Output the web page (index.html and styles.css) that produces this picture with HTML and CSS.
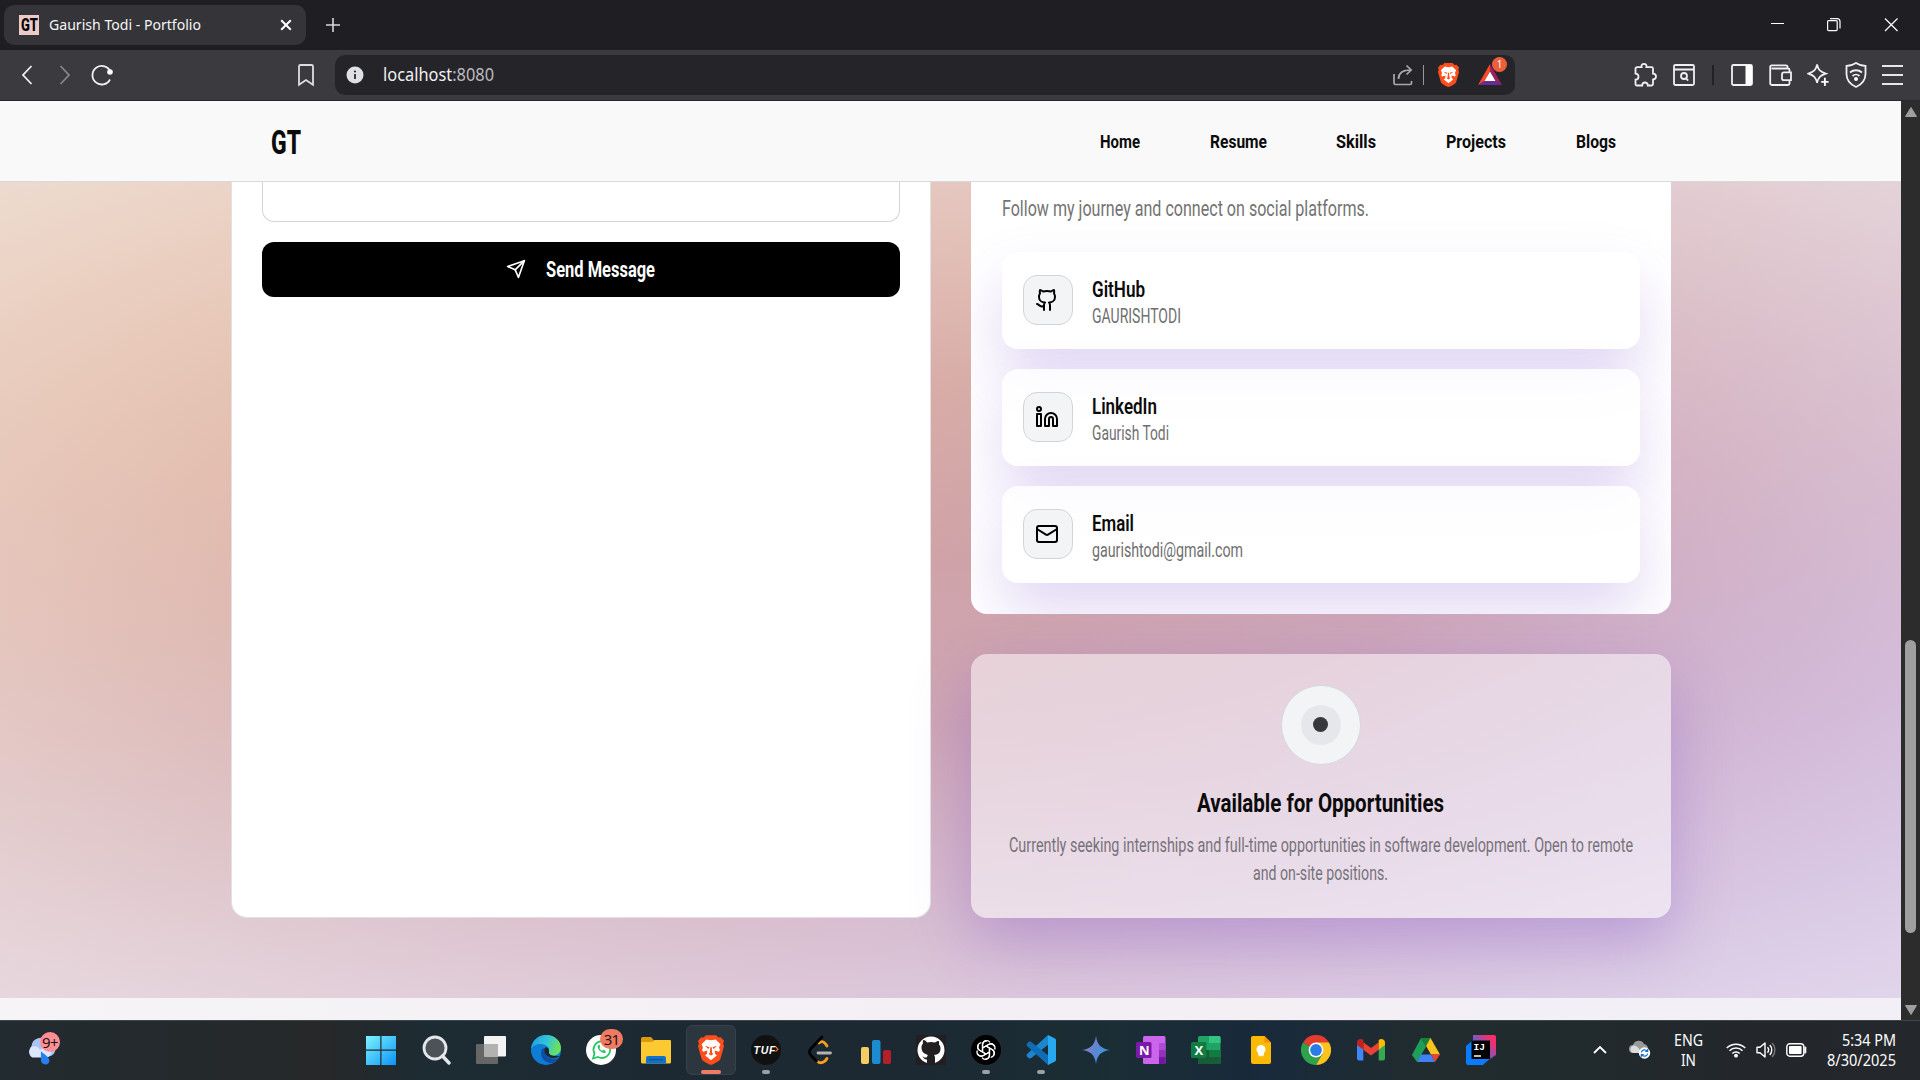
FILE: index.html
```html
<!DOCTYPE html>
<html lang="en">
<head>
<meta charset="utf-8">
<title>Gaurish Todi - Portfolio</title>
<link rel="stylesheet" href="styles.css">
</head>
<body>
<div class="tabstrip">
  <div class="tab">
    <div class="favicon"><span class="fit" data-w="17">GT</span></div>
    <span class="tab-title"><span class="fit" data-w="152">Gaurish Todi - Portfolio</span></span>
    <svg class="tab-close" width="12" height="12" viewBox="0 0 12 12"><path d="M1.2 1.2l9.6 9.6M10.800 1.200l-9.600 9.600" stroke="#fff" stroke-width="2" fill="none"/></svg>
  </div>
  <svg class="newtab" width="14" height="14" viewBox="0 0 14 14"><path d="M7 0v14M0 7h14" stroke="#d8d8da" stroke-width="1.6"/></svg>
  <div class="winctl">
    <svg width="58" height="50" viewBox="0 0 58 50"><path d="M25 23.500h13" stroke="#fff"/></svg>
    <svg width="58" height="50" viewBox="0 0 58 50"><g fill="none" stroke="#fff" stroke-width="1.200"><rect x="23.600" y="20.600" width="9.600" height="10" rx="1"/><path d="M26 18.600h7a3 3 0 0 1 3 3v7"/></g></svg>
    <svg width="58" height="50" viewBox="0 0 58 50"><path d="M23 18.500l12.500 12.500M35.500 18.500L23 31" stroke="#fff" stroke-width="1.200"/></svg>
  </div>
</div>

<div class="toolbar">
  <div class="nav-btns">
    <svg width="12" height="22" viewBox="0 0 12 22"><path d="M10.500 2L2 11l8.500 9" class="ln"/></svg>
    <svg width="12" height="22" viewBox="0 0 12 22" class="dim"><path d="M1.500 2L10 11l-8.500 9" class="ln"/></svg>
    <svg width="24" height="24" viewBox="0 0 24 24"><path d="M20.500 9A9.300 9.300 0 1 0 20 16.500" class="ln"/><circle cx="20" cy="9" r="2.800" fill="#fff"/></svg>
  </div>
  <svg class="bookmark" width="18" height="24" viewBox="0 0 18 24"><path d="M3.500 2h11a1.500 1.500 0 0 1 1.500 1.500v18.300L9 17l-7 4.800V3.500A1.500 1.500 0 0 1 3.500 2z" class="ln"/></svg>
  <div class="urlbar">
    <svg width="18" height="18" viewBox="0 0 18 18"><circle cx="9" cy="9" r="8.500" fill="#dfdfe6"/><path d="M9 8v5" stroke="#2a2930" stroke-width="1.800"/><circle cx="9" cy="5.500" r="1.100" fill="#2a2930"/></svg>
    <span class="url"><span class="fit" data-w="111">localhost<i>:8080</i></span></span>
    <svg class="share" width="22" height="22" viewBox="0 0 22 22"><g fill="none" stroke="#a9a9ad" stroke-width="1.700"><path d="M2 10v9a1.500 1.500 0 0 0 1.500 1.500H18a1.500 1.500 0 0 0 1.500-1.500v-2"/><path d="M6.500 15c0-6 4-9 12.500-9M14.500 1.500L19.200 6l-4.700 4.500"/></g></svg>
    <span class="usep"></span>
    <svg class="shield" width="21" height="24" viewBox="0 0 28 32"><use href="#brave"/></svg>
    <div class="bat">
      <svg width="24" height="22" viewBox="0 0 24 22"><path d="M12 0L0 21l6.500-3.500L12 7z" fill="#ff4724"/><path d="M12 0l12 21-6-3.500L12 7z" fill="#9e1f63"/><path d="M0 21h24l-6-4H6z" fill="#662d91"/><path d="M12 7.500l5.500 9.500h-11z" fill="#fff"/></svg>
      <b>1</b>
    </div>
  </div>
  <div class="tools">
    <svg width="24" height="26" viewBox="0 0 24 26"><path class="ln" d="M4 5.200h4.600c-1.200-4.500 6-4.500 4.800 0h5.100a1.500 1.500 0 0 1 1.500 1.500v5c4 .3 4 5.500 0 5.800V22a1.500 1.500 0 0 1-1.500 1.500h-3.700c.2-4-5.600-4-5.600 0H4A1.500 1.500 0 0 1 2.500 22v-4.300c4-.2 4-5.800 0-6v-5A1.500 1.500 0 0 1 4 5.200z"/></svg>
    <svg width="22" height="24" viewBox="0 0 22 24"><g class="ln"><rect x="1" y="2" width="20" height="20" rx="1.500"/><path d="M1 6.500h20M13.200 15.500l2 2.200"/><circle cx="11" cy="13" r="3"/></g></svg>
    <span class="tsep"></span>
    <svg width="22" height="24" viewBox="0 0 22 24"><rect class="ln" x="1" y="2" width="20" height="20" rx="1.500"/><path d="M14.500 2H21v20h-6.500z" fill="#fff"/></svg>
    <svg width="23" height="24" viewBox="0 0 23 24"><g class="ln"><path d="M20.500 9V7a1.500 1.500 0 0 0-1.500-1.500H2.500M18.500 5.500V3.800A1.500 1.500 0 0 0 17 2.300H3a1.800 1.800 0 0 0-1.800 1.800v16A1.800 1.800 0 0 0 3 22h16a1.500 1.500 0 0 0 1.500-1.500V18"/><path d="M22 9.300h-7a2 2 0 0 0-2 2v3.900a2 2 0 0 0 2 2h7z"/></g></svg>
    <svg width="22" height="26" viewBox="0 0 24 26"><path class="ln" d="M11 1.500c1.500 6 3.200 8 9.500 10-6.300 2-8 4-9.500 10-1.500-6-3.200-8-9.500-10 6.300-2 8-4 9.500-10z"/><path d="M19.500 16v9M15.500 20.500h8" stroke="#fff" stroke-width="2"/></svg>
    <svg width="22" height="26" viewBox="0 0 22 26"><g class="ln"><path d="M11 1c3 2 6 3 9.500 3v8c0 7-4 10.500-9.500 13C5.500 22.500 1.500 19 1.500 12V4C5 4 8 3 11 1z"/><path d="M5 10.500c3.500-3 8.500-3 12 0M7.500 14c2-1.900 5-1.900 7 0"/></g><circle cx="11" cy="17" r="2" fill="#fff"/></svg>
    <svg width="21" height="22" viewBox="0 0 21 22"><path d="M0 2h21M0 11h21M0 20h21" stroke="#e6e6e8" stroke-width="1.800"/></svg>
  </div>
</div>

<div class="viewport">
<div class="page">
  <header class="site-header">
    <span class="logo"><span class="fit" data-w="30">GT</span></span>
    <nav>
      <a><span class="fit" data-w="40">Home</span></a>
      <a><span class="fit" data-w="57">Resume</span></a>
      <a><span class="fit" data-w="40">Skills</span></a>
      <a><span class="fit" data-w="60">Projects</span></a>
      <a><span class="fit" data-w="40">Blogs</span></a>
    </nav>
  </header>
  <section class="contact">
    <div class="form-card">
      <div class="textarea"></div>
      <div class="send">
        <svg width="20" height="20" viewBox="0 0 24 24" fill="none" stroke="#fff" stroke-width="2" stroke-linejoin="round" stroke-linecap="round"><path d="M22 2L2 9l9 4 4 9z"/><path d="M22 2L11 13"/></svg>
        <span class="fit" data-w="109">Send Message</span>
      </div>
    </div>
    <div class="side">
      <div class="social-card">
        <p class="lead"><span class="fit" data-w="367">Follow my journey and connect on social platforms.</span></p>
        <div class="social">
          <div class="ico"><svg width="24" height="24" viewBox="0 0 24 24"><path d="M15 22v-4a4.800 4.800 0 0 0-1-3.500c3 0 6-2 6-5.500.08-1.250-.27-2.480-1-3.500.28-1.150.28-2.350 0-3.500 0 0-1 0-3 1.500-2.640-.5-5.360-.5-8 0C6 2 5 2 5 2c-.3 1.150-.3 2.350 0 3.500A5.400 5.400 0 0 0 4 9c0 3.500 3 5.500 6 5.500-.39.490-.68 1.050-.85 1.650-.17.600-.22 1.230-.15 1.850v4"/><path d="M9 18c-4.510 2-5-2-7-2"/></svg></div>
          <div class="txt"><h4><span class="fit" data-w="53">GitHub</span></h4><p><span class="fit" data-w="89">GAURISHTODI</span></p></div>
        </div>
        <div class="social">
          <div class="ico"><svg width="24" height="24" viewBox="0 0 24 24"><path d="M16 8a6 6 0 0 1 6 6v7h-4v-7a2 2 0 0 0-4 0v7h-4v-7a6 6 0 0 1 6-6z"/><path d="M2 9h4v12H2z"/><circle cx="4" cy="4" r="2"/></svg></div>
          <div class="txt"><h4><span class="fit" data-w="65">LinkedIn</span></h4><p><span class="fit" data-w="77">Gaurish Todi</span></p></div>
        </div>
        <div class="social">
          <div class="ico"><svg width="24" height="24" viewBox="0 0 24 24"><rect x="2" y="4" width="20" height="16" rx="2"/><path d="M22 7l-8.970 5.700a1.940 1.940 0 0 1-2.060 0L2 7"/></svg></div>
          <div class="txt"><h4><span class="fit" data-w="42">Email</span></h4><p><span class="fit" data-w="151">gaurishtodi@gmail.com</span></p></div>
        </div>
      </div>
      <div class="avail">
        <div class="ring"><div class="ring2"><div class="dot"></div></div></div>
        <h3><span class="fit" data-w="247">Available for Opportunities</span></h3>
        <p><span class="fit" data-w="624">Currently seeking internships and full-time opportunities in software development. Open to remote</span></p>
        <p><span class="fit" data-w="135">and on-site positions.</span></p>
      </div>
    </div>
  </section>
  <div class="footer"></div>
</div>
<div class="scrollbar">
  <svg width="12" height="10" viewBox="0 0 12 10"><path d="M6 0.500l5.500 9h-11z" fill="#9f9f9f" stroke="#9f9f9f" stroke-linejoin="round"/></svg>
  <div class="thumb"></div>
  <svg width="12" height="10" viewBox="0 0 12 10"><path d="M6 9.500L0.500.5h11z" fill="#9f9f9f" stroke="#9f9f9f" stroke-linejoin="round"/></svg>
</div>
</div>

<div class="taskbar">
  <div class="weather">
    <svg width="34" height="36" viewBox="0 0 34 36"><path d="M9 27a7 7 0 0 1-1-11 9.500 9.500 0 0 1 17-5 8 8 0 0 1 1 16z" fill="#a9c3f2"/><path d="M9 28a6.500 6.500 0 0 1-1-11c4-2 8 0 9 3 3-3 8-3 10-1a5.500 5.500 0 0 1-2 9z" fill="#dce7fb"/><path d="M18 21.500c4 3.500 9 6.500 9 10a4 4 0 0 1-4.300 4 4.500 4.500 0 0 1-4.700-4.300z" fill="#257fee"/></svg>
    <b>9+</b>
  </div>
  <div class="apps">
    <div><svg width="30" height="30" viewBox="0 0 30 30"><defs><linearGradient id="w" x2="1" y2="1"><stop stop-color="#7df3ff"/><stop offset="1" stop-color="#0a94f5"/></linearGradient></defs><path fill="url(#w)" d="M0 1h14.300v13.500H0zM15.500 1H30v13.500H15.500zM0 15.700h14.300V30H0zM15.500 15.700H30V30H15.500z"/></svg></div>
    <div><svg width="30" height="30" viewBox="0 0 30 30"><circle cx="14" cy="13" r="11" fill="#4b5258" stroke="#e4e7ea" stroke-width="2.800"/><path d="M21.500 21l6.500 7" stroke="#e4e7ea" stroke-width="3.400" stroke-linecap="round"/></svg></div>
    <div><svg width="30" height="30" viewBox="0 0 30 30"><rect y="9" width="22" height="20" rx="1" fill="#666"/><rect x="8" y="1" width="22" height="20.500" rx="1" fill="#f3f3f3"/><path d="M8 9h14v12.500H8z" fill="#b2b2b2"/></svg></div>
    <div><svg width="30" height="30" viewBox="0 0 30 30"><defs><linearGradient id="e1" x2="1" y2=".3"><stop stop-color="#1a9be4"/><stop offset=".6" stop-color="#35c6d6"/><stop offset="1" stop-color="#6be05a"/></linearGradient></defs><circle cx="15" cy="15" r="15" fill="#0f7cd6"/><path d="M0 14C1 5 7.500 0 15 0c9 0 15 6 15 13 0 5-4 7.500-8 7.500-4 0-5.500-1.500-4.200-3.500C19.500 13 15 9 10 9 5 9 1.500 11 0 14z" fill="url(#e1)"/><path d="M11 14c-3 7 2 14 9 14 3 0 6-1.500 8-5C18 26 12 20 14 13z" fill="#0d4fa0"/><path d="M14 13c-2 4 1 9 7 10 3 .3 5.500-.3 7.500-2 -3 0-12 1-10.500-5.500C18 13.500 15.500 11 14 13z" fill="#1a2630"/></svg></div>
    <div class="wa"><svg width="30" height="30" viewBox="0 0 30 30"><circle cx="15" cy="15" r="15" fill="#fff"/><path d="M7 23.500l1.500-5A8.300 8.300 0 1 1 12 22z" fill="none" stroke="#25c862" stroke-width="1.800"/><path d="M12 10.500c-2 3 4.500 9 7.500 7.200l.3-1.700-2.500-1.200-1.200 1c-1.500-.8-2.200-1.800-2.600-2.800l.8-1.200-1-2.200z" fill="#25c862"/></svg><b>31</b></div>
    <div><svg width="30" height="30" viewBox="0 0 30 30"><path d="M0 3.500A1.500 1.500 0 0 1 1.500 2H10l3 3.500V9H0z" fill="#d99a0b"/><path d="M0 7h11l2.500-2H29a1 1 0 0 1 1 1v21a1.500 1.500 0 0 1-1.500 1.500h-27A1.500 1.500 0 0 1 0 27z" fill="#fcc931"/><path d="M5 28.500V23a2 2 0 0 1 2-2h16a2 2 0 0 1 2 2v5.500z" fill="#1072cc"/><path d="M8 24.700h14" stroke="#0a4a94"/></svg></div>
    <div class="active"><svg width="26" height="30" viewBox="0 0 28 32"><g id="brave"><path d="M8.500 0h11L22 2.500l2.500-.3L28 6l-1 3 1 3-4 14c-.8 2-8.500 6-10 6s-9.200-4-10-6L0 12l1-3-1-3 3.500-3.800 2.500.3z" fill="#ff4e1b"/><path d="M14 5.500l5-.8 5.200 5c-.8 2-2 3-1.200 4.800 1.200 1.500.2 3-.8 3.500L18 16.500l.3 3.500 2 2L14 27l-6.300-5 2-2 .3-3.500L5.800 18c-1-.5-2-2-.8-3.500.8-1.800-.4-2.800-1.200-4.800l5.200-5z" fill="#fff"/><path d="M7.500 11.500l5 1.500-1.500 1.800zM20.500 11.500l-5 1.500 1.500 1.800zM13.200 13h1.600l.4 6 1.300 1.200L14 22l-2.500-1.800 1.300-1.200z" fill="#ff4e1b"/></g></svg><i></i></div>
    <div class="run"><svg width="30" height="30" viewBox="0 0 30 30"><circle cx="15" cy="15" r="15" fill="#111"/><text x="2.500" y="19" textLength="22" font-size="10.500" font-weight="bold" font-style="italic" fill="#fff" font-family="Liberation Sans, sans-serif">TUF</text><path d="M25 12l2 2.200-2.500 2.500" stroke="#f06a2c" stroke-width="1.200" fill="none"/></svg><i></i></div>
    <div><svg width="30" height="30" viewBox="0 0 30 30"><g fill="none" stroke-width="2.800" stroke-linecap="round"><path d="M13 8c3-3 6-.5 8 3M11.500 26.500c3 2.500 7.500 1 9.500-3" stroke="#f7a11b"/><path d="M16 2L5 13.500c-2 2-2 5 0 7l5.500 5.500" stroke="#000"/><path d="M12 18h12.500" stroke="#b3b3b3"/></g></svg></div>
    <div><svg width="30" height="30" viewBox="0 0 30 30"><rect x="0" y="12" width="8" height="17" rx="2" fill="#f4ce63"/><rect x="11" y="5" width="8.500" height="24" rx="2" fill="#1c8bd0"/><rect x="22" y="15" width="8" height="14" rx="2" fill="#b3202a"/></svg></div>
    <div><svg width="30" height="30" viewBox="0 0 30 30"><path fill="#231f20" d="M0 0h30v30H0z"/><path d="M11 28c-6-2-9.500-7-9.500-13a13.500 13.500 0 0 1 27 0c0 6-4 11-9.500 13v-5c0-1.500-.4-2.300-1-3 4-.5 6.500-2 6.500-6.500 0-2-.6-3-1.500-4 .3-1.500.2-2.500-.2-3.600-1.500 0-2.700.7-4 1.600a13 13 0 0 0-7.600 0C9.900 5.600 8.700 4.900 7.200 4.900 6.800 6 6.700 7 7 8.500c-.9 1-1.500 2-1.500 4C5.500 17 8 18.500 12 20c-.7.700-1 1.300-1 2.200-2 .8-3.500.2-4.700-1.700 1 3 2.700 4.300 4.700 4z" fill="#fff"/></svg></div>
    <div class="run"><svg width="30" height="30" viewBox="0 0 30 30"><circle cx="15" cy="15" r="15" fill="#000"/><g fill="none" stroke="#fff" stroke-width="1.300"><path id="kn" d="M11.500 17V9.500a4.200 4.200 0 0 1 7.500-2.200M11.500 13l6.500-3.700a4 4 0 0 1 5.500 2"/><use href="#kn" transform="rotate(60 15 15)"/><use href="#kn" transform="rotate(120 15 15)"/><use href="#kn" transform="rotate(180 15 15)"/><use href="#kn" transform="rotate(240 15 15)"/><use href="#kn" transform="rotate(300 15 15)"/></g></svg><i></i></div>
    <div class="run"><svg width="30" height="30" viewBox="0 0 30 30"><path d="M22 0L1 19l-.5 2L3 23.500l2-.3L23 9z" fill="#1a86cf"/><path d="M22 30L1 11l-.5-2L3 6.500l2 .3L23 21z" fill="#0f6db5"/><path d="M22 0l7 3.500a2 2 0 0 1 1 1.500v20a2 2 0 0 1-1 1.500L22 30z" fill="#27a9f2"/></svg><i></i></div>
    <div><svg width="30" height="30" viewBox="0 0 30 30"><defs><linearGradient id="gm" x2="1" y1=".3" y2=".7"><stop stop-color="#9a7cc0"/><stop offset=".5" stop-color="#5b86d8"/><stop offset="1" stop-color="#2f9fc8"/></linearGradient></defs><path d="M15 1c1.300 9 5 12.700 14 14-9 1.300-12.700 5-14 14-1.300-9-5-12.700-14-14C10 13.700 13.700 10 15 1z" fill="url(#gm)"/></svg></div>
    <div><svg width="30" height="30" viewBox="0 0 30 30"><rect x="7" y="1" width="22.500" height="28" rx="1.500" fill="#cb66ec"/><path d="M23 8h6.500v7H23z" fill="#b04ad6"/><path d="M23 15h6.500v7H23z" fill="#9133bd"/><path d="M23 22h6.500v5.500a1.500 1.500 0 0 1-1.500 1.500h-5z" fill="#7516a4"/><rect x="0" y="7" width="15.500" height="16" rx="1.500" fill="#7b1aa8"/><text x="3" y="19.500" font-size="13" font-weight="bold" fill="#fff" font-family="Open Sans, sans-serif">N</text></svg></div>
    <div><svg width="30" height="30" viewBox="0 0 30 30"><rect x="7" y="1" width="22.500" height="28" rx="1.500" fill="#21a366"/><path d="M18 1h10a1.500 1.500 0 0 1 1.500 1.500V8H18z" fill="#33c481"/><path d="M7 15h11v7H7z" fill="#185c37"/><path d="M18 15h11.500v7H18z" fill="#107c41"/><path d="M7 22h22.500v5.500A1.500 1.500 0 0 1 28 29H8.500A1.500 1.500 0 0 1 7 27.500z" fill="#185c37"/><rect x="0" y="7" width="15.500" height="16" rx="1.500" fill="#107c41"/><text x="3.500" y="19.500" font-size="13" font-weight="bold" fill="#fff" font-family="Open Sans, sans-serif">X</text></svg></div>
    <div><svg width="30" height="30" viewBox="0 0 30 30"><path d="M5 3a2 2 0 0 1 2-2h11.500l6.500 6.500V27a2 2 0 0 1-2 2H7a2 2 0 0 1-2-2z" fill="#fbb904"/><path d="M18.500 1l6.500 6.500h-6.500z" fill="#f29100"/><circle cx="15" cy="14.500" r="4.500" fill="#fff"/><path d="M12.500 18h5v1.700h-5zM12.500 20.700h5" stroke="#fff" fill="#fff"/></svg></div>
    <div><svg width="30" height="30" viewBox="0 0 30 30"><path d="M15 15L2 7.500A15 15 0 0 1 28 7.500z" fill="#e33b2e"/><path d="M15 15L2 7.500A15 15 0 0 0 15 30l6.500-11.200z" fill="#2fa24c"/><path d="M15 7.500h13A15 15 0 0 1 15 30l6.500-11.200z" fill="#fcc31e"/><circle cx="15" cy="15" r="7.400" fill="#fff"/><circle cx="15" cy="15" r="5.900" fill="#2a7de9"/></svg></div>
    <div><svg width="30" height="30" viewBox="0 0 30 30"><path d="M1 7v16.500a2 2 0 0 0 2 2h4.300V12z" fill="#4285f4"/><path d="M29 7v16.500a2 2 0 0 1-2 2h-4.300V12z" fill="#34a853"/><path d="M7.300 7.200L15 13l7.700-5.800v7.600L15 20.500l-7.700-5.700z" fill="#ea4335"/><path d="M1 7.500C1 4 5 3 7.300 5v9.800L1 10z" fill="#c5221f"/><path d="M29 7.500C29 4 25 3 22.700 5v9.800L29 10z" fill="#fbbc04"/></svg></div>
    <div><svg width="30" height="30" viewBox="0 0 30 30"><path d="M10 3l5 8.700L6 27l-5-7z" fill="#1e9e58"/><path d="M19.500 3L29 19.500H20L10.500 3z" fill="#fcc31e"/><path d="M10 3h9.500l-4.700 8.500z" fill="#188038"/><path d="M10 19.500h10L24 27H6z" fill="#3f82f3"/><path d="M20 19.500h9L24 27z" fill="#ea4335"/></svg></div>
    <div><svg width="30" height="30" viewBox="0 0 30 30"><defs><linearGradient id="ij" x2="1" y1="1" y2="0"><stop offset=".3" stop-color="#3b6cf0"/><stop offset=".8" stop-color="#f0306e"/></linearGradient></defs><path d="M7 0h21a2 2 0 0 1 2 2v18L18 28 7 12z" fill="url(#ij)"/><path d="M0 11l7-6v19h16l-6 6H2a2 2 0 0 1-2-2z" fill="#087cfa"/><path d="M5.500 5.500h18.500v18.500H5.500z" fill="#000"/><text x="7.500" y="14.500" font-size="9.500" font-weight="bold" fill="#fff" font-family="Liberation Mono, monospace">IJ</text><path d="M8 21h7" stroke="#fff" stroke-width="1.500"/></svg></div>
  </div>
  <div class="tray">
    <svg class="chev" width="14" height="10" viewBox="0 0 14 10"><path d="M1 8l6-6 6 6" fill="none" stroke="#fff" stroke-width="1.800"/></svg>
    <svg class="cloud" width="22" height="20" viewBox="0 0 22 20"><path d="M4 13a4 4 0 0 1 0-8 6 6 0 0 1 11-1 5 5 0 0 1 2 9z" fill="#9a9a9a"/><path d="M4 13a4 4 0 0 1 0-7.500c4 0 6 2 8 7.500z" fill="#dcdcdc"/><circle cx="15.500" cy="13" r="5.700" fill="#fff"/><path d="M12.300 12.500a3.300 3.300 0 0 1 6-1.200M18.700 13.500a3.300 3.300 0 0 1-6 1.200M18.700 9v2.500h-2.500M12.300 17v-2.500h2.500" stroke="#1470c8" stroke-width="1.200" fill="none"/></svg>
    <div class="lang"><span class="fit" data-w="29">ENG</span><span class="fit" data-w="15">IN</span></div>
    <svg class="wifi" width="20" height="16" viewBox="0 0 20 16"><g fill="none" stroke="#fff" stroke-width="1.500"><path d="M.8 6a13 13 0 0 1 18.400 0M3.500 8.800a9.200 9.200 0 0 1 13 0M6.300 11.500a5.300 5.300 0 0 1 7.400 0"/></g><circle cx="10" cy="13.700" r="1.900" fill="#fff"/></svg>
    <svg class="vol" width="20" height="18" viewBox="0 0 20 18"><g fill="none" stroke="#fff" stroke-width="1.400"><path d="M1 6.300h3L9 2v14l-5-4.300H1z" stroke-linejoin="round"/><path d="M11.500 6.300c1.300 1.500 1.300 3.900 0 5.400M13.800 4c2.600 2.700 2.600 7.300 0 10"/><path d="M16.200 2c3.600 4 3.600 10 0 14" stroke="#777"/></g></svg>
    <svg class="batt" width="21" height="14" viewBox="0 0 21 14"><rect x=".8" y=".8" width="17" height="12.400" rx="3" fill="none" stroke="#fff" stroke-width="1.400"/><rect x="3" y="3" width="12.600" height="8" rx="1" fill="#fff"/><path d="M19.300 4.500v5" stroke="#fff" stroke-width="2" stroke-linecap="round"/></svg>
    <div class="clock"><span class="fit" data-w="54">5:34 PM</span><span class="fit" data-w="69">8/30/2025</span></div>
  </div>
</div>
<script src="fit.js"></script>
</body>
</html>
```
FILE: styles.css
```css
* { box-sizing: border-box; margin: 0; padding: 0; }
body { width: 1920px; height: 1080px; overflow: hidden; background: #1f1e23; font-family: "Noto Sans", sans-serif; display: flex; flex-direction: column; }
svg { display: block; flex: none; }
.fit { display: inline-block; white-space: nowrap; transform-origin: 0 50%; }

/* browser chrome */
.tabstrip { height: 50px; flex: none; background: #1f1e23; display: flex; align-items: center; padding-left: 4px; }
.tab { width: 302px; height: 40px; border-radius: 10px; background: #353439; display: flex; align-items: center; padding: 0 14px 0 15px; }
.favicon { width: 20px; height: 20px; background: #eccac8; color: #000; font: 800 19px/20px Roboto, sans-serif; padding-left: 2px; }
.tab-title { margin-left: 10px; margin-top: -2px; color: #f4f4f5; font-size: 14.500px; }
.tab-close { margin-left: auto; }
.newtab { margin-left: 20px; }
.winctl { margin-left: auto; display: flex; }
.toolbar { height: 51px; flex: none; background: #3b3a3f; border-bottom: 1px solid #29282c; display: flex; align-items: center; }
.ln { fill: none; stroke: #f0f0f2; stroke-width: 1.8; }
.dim { opacity: .42; }
.nav-btns { display: flex; align-items: center; gap: 26px; padding-left: 21px; width: 297px; }
.nav-btns svg:last-child { margin-left: -7px; }
.bookmark { opacity: .9; }
.urlbar { margin-left: 20px; width: 1180px; height: 40px; border-radius: 10px; background: #252429; display: flex; align-items: center; padding-left: 11px; }
.url { margin-left: 19px; margin-top: -2px; color: #f0f0f2; font-size: 17.500px; }
.url i { font-style: normal; color: #b9b9bd; }
.share { margin-left: auto; }
.usep { width: 1px; height: 20px; background: #98989c; margin-left: 9px; }
.shield { margin-left: 14px; }
.bat { position: relative; margin: 0 13px 0 19px; }
.bat b { position: absolute; left: 14px; top: -7px; width: 15px; height: 15px; border-radius: 8px; background: #ed5f3b; color: #fff; font: 10px/15px "Noto Sans", sans-serif; text-align: center; }
.tools { margin-left: auto; padding-right: 17px; display: flex; align-items: center; gap: 15.400px; }
.tsep { width: 2px; height: 20px; background: #222126; margin: 0 2px; }

/* page */
.viewport { height: 919px; flex: none; display: flex; }
.page { width: 1901px; height: 919px; overflow: hidden; display: flex; flex-direction: column; font-family: Roboto, sans-serif; }
.site-header { height: 81px; flex: none; background: #f9f9f9; border-bottom: 1px solid #d8dada; display: flex; align-items: center; justify-content: space-between; padding: 1px 285px 0 271px; color: #0b0b0b; }
.logo { font-size: 34px; font-weight: 800; }
.site-header nav { display: flex; gap: 69.800px; font-size: 18.500px; font-weight: 700; }
.contact { height: 816px; flex: none; display: flex; gap: 40px; padding: 0 230px 80px 231px; align-items: stretch;
  background:
    radial-gradient(ellipse 1650px 610px at 960px 375px, rgba(240,236,242,0) 0, rgba(240,236,242,.08) 28%, rgba(240,236,242,.62) 80%, rgba(240,236,242,.78) 100%),
    linear-gradient(156deg, #e8b78a 0, #dcab9b 28%, #d0a3a6 46%, #c99fb5 64%, #c09ac8 82%, #b89ad8 100%); }
.form-card { width: 700px; background: #fff; border: 1px solid #e3dfe2; border-top: 0; border-radius: 0 0 16px 16px; padding: 0 30px; }
.textarea { height: 40px; border: 1px solid #d1d5db; border-top: 0; border-radius: 0 0 12px 12px; }
.send { margin-top: 20px; height: 55px; border-radius: 12px; background: #000; color: #fff; display: flex; align-items: center; justify-content: center; gap: 20px; font-size: 21.800px; font-weight: 700; padding-right: 2px; }
.send svg { margin-top: -2px; }
.side { width: 700px; display: flex; flex-direction: column; gap: 40px; }
.social-card { height: 432px; flex: none; background: #fff; border-radius: 0 0 16px 16px; padding: 11px 31px 31px; display: flex; flex-direction: column; gap: 20px; overflow: hidden; }
.lead { height: 39px; line-height: 31px; font-size: 21.800px; color: #737373; }
.social { height: 97px; flex: none; border-radius: 16px; background: rgba(255,255,255,.8); display: flex; align-items: center; padding: 0 21px; gap: 19px; box-shadow: 0 30px 60px rgba(124,77,207,.22); }
.ico { width: 50px; height: 50px; margin-top: -1px; border-radius: 14px; border: 1px solid #d1d5db; background: #f3f4f6; display: grid; place-items: center; }
.ico svg { fill: none; stroke: #000; stroke-width: 2; stroke-linecap: round; stroke-linejoin: round; margin-left: -2px; }
.txt { padding-top: 3px; }
.txt h4 { font-size: 21.800px; line-height: 28px; font-weight: 600; color: #0b0b0b; }
.txt p { font-size: 20px; line-height: 25px; color: #6f6f6f; }
.avail { height: 264px; border-radius: 16px; background: rgba(255,255,255,.5); display: flex; flex-direction: column; align-items: center; padding-top: 31px; padding-right: 1px; box-shadow: 0 24px 60px rgba(124,77,190,.33); }
.ring { width: 80px; height: 80px; border-radius: 50%; background: #f3f4f6; border: 1px solid #d5dadf; display: grid; place-items: center; }
.ring2 { width: 40px; height: 40px; border-radius: 50%; background: #e5e7eb; display: grid; place-items: center; }
.dot { width: 15px; height: 15px; margin: -1px 0 0 -1px; border-radius: 50%; background: #38383a; }
.avail h3 { margin-top: 21px; font-size: 25px; line-height: 35px; font-weight: 700; color: #0b0b0b; margin-bottom: 10px; }
.avail p { font-size: 20px; line-height: 28px; color: #77727a; }
.footer { flex: 1; background: linear-gradient(90deg, #f6f4f6, #f4eff4 50%, #f2eff7); }
.scrollbar { width: 19px; background: #2c2c2c; display: flex; flex-direction: column; align-items: center; padding: 6px 0 5px; }
.thumb { width: 11px; height: 293px; border-radius: 6px; background: #9f9f9f; margin: 523px 0 auto; }

/* taskbar */
.taskbar { height: 60px; flex: none; background: linear-gradient(90deg, #222b30 0, #262829 17%, #1d2b33 22%, #1c2832 45%, #1b2d34 57%, #182a3b 66%, #222c2e 75%, #202b2d 80%, #23272c 90%, #24272b 100%); border-top: 1px solid #3d484c; display: flex; align-items: center; position: relative; }
.weather { position: relative; width: 353px; padding-left: 24px; }
.weather b { position: absolute; left: 40px; top: -4px; width: 20px; height: 20px; border-radius: 50%; background: #ff8f95; color: #221013; font: 15px/20px "Noto Sans", sans-serif; text-align: center; letter-spacing: -.5px; }
.weather svg { width: 32px; height: 34px; margin-top: -5px; }
.apps { display: flex; height: 59px; align-items: center; padding-bottom: 1px; }
.apps > div { width: 55px; height: 50px; display: grid; place-items: center; position: relative; }
.apps > .active { width: 50px; margin: 0 2px 0 3px; background: #2c363f; border: 1px solid #36414a; border-radius: 6px; }
.apps i { position: absolute; bottom: 1px; left: 50%; width: 8px; height: 4px; margin-left: -4px; border-radius: 2px; background: #9aa0a4; }
.apps .active i { width: 20px; margin-left: -10px; background: #f07c65; bottom: 0; }
.apps b { position: absolute; left: 27px; top: 4px; width: 23px; height: 20px; border-radius: 10px; background: #ef7a63; color: #2a1512; font: 15px/20px "Noto Sans", sans-serif; text-align: center; letter-spacing: -.8px; }
.tray { margin-left: auto; display: flex; align-items: center; color: #fff; font-size: 15.500px; padding-right: 24px; padding-bottom: 2px; }
.lang, .clock { display: flex; flex-direction: column; line-height: 20px; }
.lang { align-items: center; margin-left: 22px; width: 30px; }
.cloud { margin-left: 22px; }
.wifi { margin-left: 23px; }
.vol { margin-left: 10px; }
.batt { margin-left: 10px; }
.clock { align-items: flex-end; margin-left: 20px; }
```
FILE: fit.js
```js
// Condense each label horizontally to its set width.
document.querySelectorAll('.fit').forEach(function (el) {
  var target = parseFloat(el.dataset.w);
  var natural = el.getBoundingClientRect().width;
  el.style.width = target + 'px';
  el.style.transform = 'scaleX(' + target / natural + ')';
});
```
